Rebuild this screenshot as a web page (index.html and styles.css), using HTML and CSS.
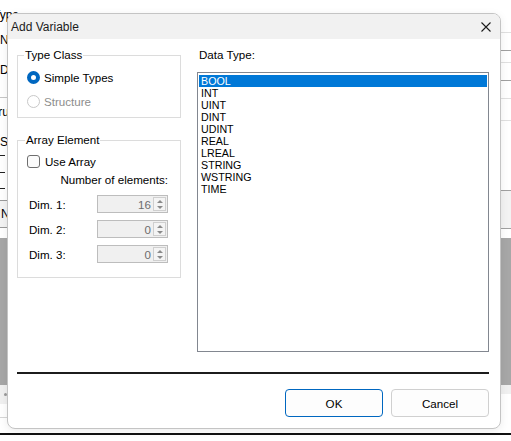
FILE: index.html
```html
<!DOCTYPE html>
<html>
<head>
<meta charset="utf-8">
<title>Add Variable</title>
<link rel="stylesheet" href="styles.css">
</head>
<body>
<div class="app">
  <div class="bg-main">
    <div class="bg-left">
      <div class="bg-text t1">Type</div>
      <div class="bg-text t2">Name</div>
      <div class="bg-text t3">Data</div>
      <div class="bg-rule"></div>
      <div class="bg-text t4">Struct</div>
      <div class="bg-text t5">Si</div>
      <div class="bg-dash d1"></div>
      <div class="bg-dash d2"></div>
      <div class="bg-dash d3"></div>
      <div class="bg-head">N</div>
      <div class="bg-grey"></div>
      <div class="bg-status"><span class="bg-dot"></span></div>
      <div class="bg-thin"></div>
    </div>
    <div class="bg-right">
      <div class="rl rl1"></div>
      <div class="rl rl2 dark"></div>
      <div class="rl rl3"></div>
      <div class="rl rl4 dark"></div>
      <div class="rl rl5"></div>
      <div class="rl rl6"></div>
      <div class="bg-head-r">Item</div>
      <div class="bg-grey-r"></div>
      <div class="bg-status-r"></div>
    </div>
  </div>
  <div class="bg-bottom"></div>

  <div class="dialog">
    <div class="titlebar">
      <span class="title">Add Variable</span>
      <svg class="close" width="10" height="10" viewBox="0 0 10 10"><path d="M0.5 0.5 L9.5 9.5 M9.5 0.5 L0.5 9.5" stroke="#1b1b1b" stroke-width="1.1" fill="none"/></svg>
    </div>
    <div class="body">
      <div class="left">
        <fieldset class="group type-group">
          <legend>Type Class</legend>
          <div class="opt">
            <span class="radio checked"></span><span>Simple Types</span>
          </div>
          <div class="opt disabled">
            <span class="radio"></span><span>Structure</span>
          </div>
        </fieldset>
        <fieldset class="group array-group">
          <legend>Array Element</legend>
          <div class="opt check-row">
            <span class="checkbox"></span><span>Use Array</span>
          </div>
          <div class="num-label">Number of elements:</div>
          <div class="dim-row">
            <span class="dim-label">Dim. 1:</span>
            <div class="spin"><span class="spin-val">16</span><span class="spin-btns"><span class="up"></span><span class="down"></span></span></div>
          </div>
          <div class="dim-row">
            <span class="dim-label">Dim. 2:</span>
            <div class="spin"><span class="spin-val">0</span><span class="spin-btns"><span class="up"></span><span class="down"></span></span></div>
          </div>
          <div class="dim-row">
            <span class="dim-label">Dim. 3:</span>
            <div class="spin"><span class="spin-val">0</span><span class="spin-btns"><span class="up"></span><span class="down"></span></span></div>
          </div>
        </fieldset>
      </div>
      <div class="right">
        <div class="dt-label">Data Type:</div>
        <div class="listbox">
          <div class="item selected">BOOL</div>
          <div class="item">INT</div>
          <div class="item">UINT</div>
          <div class="item">DINT</div>
          <div class="item">UDINT</div>
          <div class="item">REAL</div>
          <div class="item">LREAL</div>
          <div class="item">STRING</div>
          <div class="item">WSTRING</div>
          <div class="item">TIME</div>
        </div>
      </div>
    </div>
    <div class="separator"></div>
    <div class="footer">
      <button class="btn primary">OK</button>
      <button class="btn">Cancel</button>
    </div>
  </div>
</div>
</body>
</html>
```
FILE: styles.css
```css
html, body {
  margin: 0;
  padding: 0;
  background: #fff;
}
.app {
  position: relative;
  width: 511px;
  height: 441px;
  overflow: hidden;
  font-family: "Liberation Sans", Arial, sans-serif;
  font-size: 11.6px;
  color: #000;
}
.bg-main {
  display: flex;
  height: 433px;
}
.bg-left {
  width: 255px;
  display: flex;
  flex-direction: column;
}
.bg-right {
  flex: 1;
  display: flex;
  flex-direction: column;
}
.bg-bottom {
  height: 2px;
  background: #111;
}
.bg-text {
  white-space: nowrap;
  font-size: 12px;
}
.t1 { height: 32px; line-height: 30px; margin-left: -7px; }
.t2 { height: 16px; line-height: 16px; }
.t3 { height: 44px; line-height: 44px; }
.bg-rule { margin-top: 5px; border-top: 1px solid #c6c6c6; }
.t4 { height: 36px; line-height: 28px; margin-left: -13px; }
.t5 { height: 16px; line-height: 16px; }
.bg-dash { width: 5px; height: 1px; background: #222; }
.d1 { margin-top: 5px; }
.d2 { margin-top: 16px; }
.d3 { margin-top: 15px; }
.bg-head {
  margin-top: 11px;
  height: 26px;
  line-height: 26px;
  border: 1px solid #9a9a9a;
  border-left: none;
  background: #f3f3f3;
  padding-left: 1px;
  font-size: 12px;
}
.bg-grey { margin-top: 10px; height: 147px; background: #a7a7a7; }
.bg-status {
  height: 19px;
  background: #f0f0f0;
  display: flex;
  align-items: center;
  padding-left: 4px;
}
.bg-dot { width: 3px; height: 3px; border-radius: 50%; background: #9a9a9a; }
.bg-thin { margin-top: 13px; border-top: 1px solid #d6d6d6; }

.rl { border-top: 1px solid #e0e0e0; }
.rl.dark { border-top-color: #a0a0a0; }
.rl1 { margin-top: 32px; }
.rl2 { margin-top: 17px; }
.rl3 { margin-top: 11px; }
.rl4 { margin-top: 17px; }
.rl5 { margin-top: 17px; }
.rl6 { margin-top: 21px; }
.bg-head-r {
  margin-top: 69px;
  height: 37px;
  line-height: 37px;
  border-top: 1px solid #a0a0a0;
  border-bottom: 1px solid #a0a0a0;
  background: #f3f3f3;
  margin-left: -64px;
  padding-left: 50px;
  font-size: 12px;
}
.bg-grey-r { margin-top: 9px; height: 147px; background: #a7a7a7; }
.bg-status-r { height: 9px; background: #f0f0f0; }

/* dialog */
.dialog {
  position: absolute;
  left: 7px;
  top: 13px;
  width: 492px;
  height: 414px;
  border: 1px solid #c4c4c4;
  border-radius: 8px;
  background: #fff;
  overflow: hidden;
  display: flex;
  flex-direction: column;
  box-shadow: 0 2px 8px rgba(0,0,0,0.08);
}
.titlebar {
  height: 25px;
  background: #f1f1f1;
  display: flex;
  align-items: center;
  justify-content: space-between;
  padding: 0 9px 0 3px;
}
.title {
  font-family: "Liberation Sans", Arial, sans-serif;
  font-size: 12px;
  color: #1b1b1b;
}
.close { display: block; margin-top: 1px; }
.body {
  display: grid;
  grid-template-columns: 164px 292px;
  column-gap: 16px;
  padding: 9px 11px 0 9px;
}
.left {
  display: flex;
  flex-direction: column;
  gap: 15px;
}
.group {
  margin: 0;
  border: 1px solid #dcdcdc;
  padding: 3px 12px 4px 9px;
  min-width: 0;
}
.group legend {
  padding: 0 1px;
  margin-left: -3px;
  line-height: 14px;
  height: 14px;
}
.array-group legend { margin-left: -2px; }
.opt {
  height: 24px;
  display: flex;
  align-items: center;
  gap: 4px;
}
.opt.disabled { color: #8d8d8d; }
.radio {
  width: 13px;
  height: 13px;
  box-sizing: border-box;
  border-radius: 50%;
  border: 1px solid #c8c8c8;
  background: #fff;
}
.radio.checked {
  border: 4px solid #0067c0;
  background: #fff;
}
.array-group { padding-top: 4px; padding-bottom: 14px; }
.check-row { height: 20px; gap: 5px; }
.checkbox {
  width: 13px;
  height: 13px;
  box-sizing: border-box;
  border: 1px solid #6e6e6e;
  border-radius: 3px;
  background: #fbfbfb;
}
.num-label {
  height: 17px;
  line-height: 17px;
  text-align: right;
}
.dim-row {
  margin-top: 7px;
  height: 18px;
  display: flex;
  align-items: center;
  justify-content: space-between;
  padding-left: 2px;
}
.spin {
  width: 71px;
  height: 18px;
  box-sizing: border-box;
  border: 1px solid #bdbdbd;
  background: #f0f0f0;
  display: flex;
  align-items: center;
  justify-content: flex-end;
  padding-right: 1px;
}
.spin-val {
  color: #6d6d6d;
  margin-right: 2px;
}
.spin-btns {
  width: 13px;
  height: 14px;
  box-sizing: border-box;
  border: 1px solid #cfcfcf;
  display: flex;
  flex-direction: column;
  align-items: center;
  justify-content: space-around;
  background: #f4f4f4;
}
.up, .down {
  width: 0;
  height: 0;
  border-left: 3px solid transparent;
  border-right: 3px solid transparent;
}
.up { border-bottom: 3px solid #8a8a8a; }
.down { border-top: 3px solid #8a8a8a; }

.right {
  display: flex;
  flex-direction: column;
}
.dt-label {
  height: 14px;
  line-height: 14px;
  padding-left: 2px;
}
.listbox {
  margin-top: 10px;
  height: 280px;
  box-sizing: border-box;
  border: 1px solid #828790;
  padding: 1px;
  font-size: 10.7px;
}
.item {
  height: 12px;
  line-height: 12px;
  padding-left: 2px;
  white-space: nowrap;
}
.item:first-child { margin-top: 1px; }
.item.selected {
  background: #0078d7;
  color: #fff;
}
.separator {
  margin: 20px 11px 0 9px;
  height: 2px;
  background: #1c1c1c;
}
.footer {
  display: flex;
  justify-content: flex-end;
  gap: 8px;
  padding: 15px 11px 0 0;
}
.btn {
  width: 98px;
  height: 28px;
  box-sizing: border-box;
  border: 1px solid #d0d0d0;
  border-radius: 4px;
  background: #fdfdfd;
  font-family: "Liberation Sans", Arial, sans-serif;
  font-size: 11.6px;
  color: #000;
  padding: 0;
}
.btn.primary {
  border-color: #0067c0;
}
```
